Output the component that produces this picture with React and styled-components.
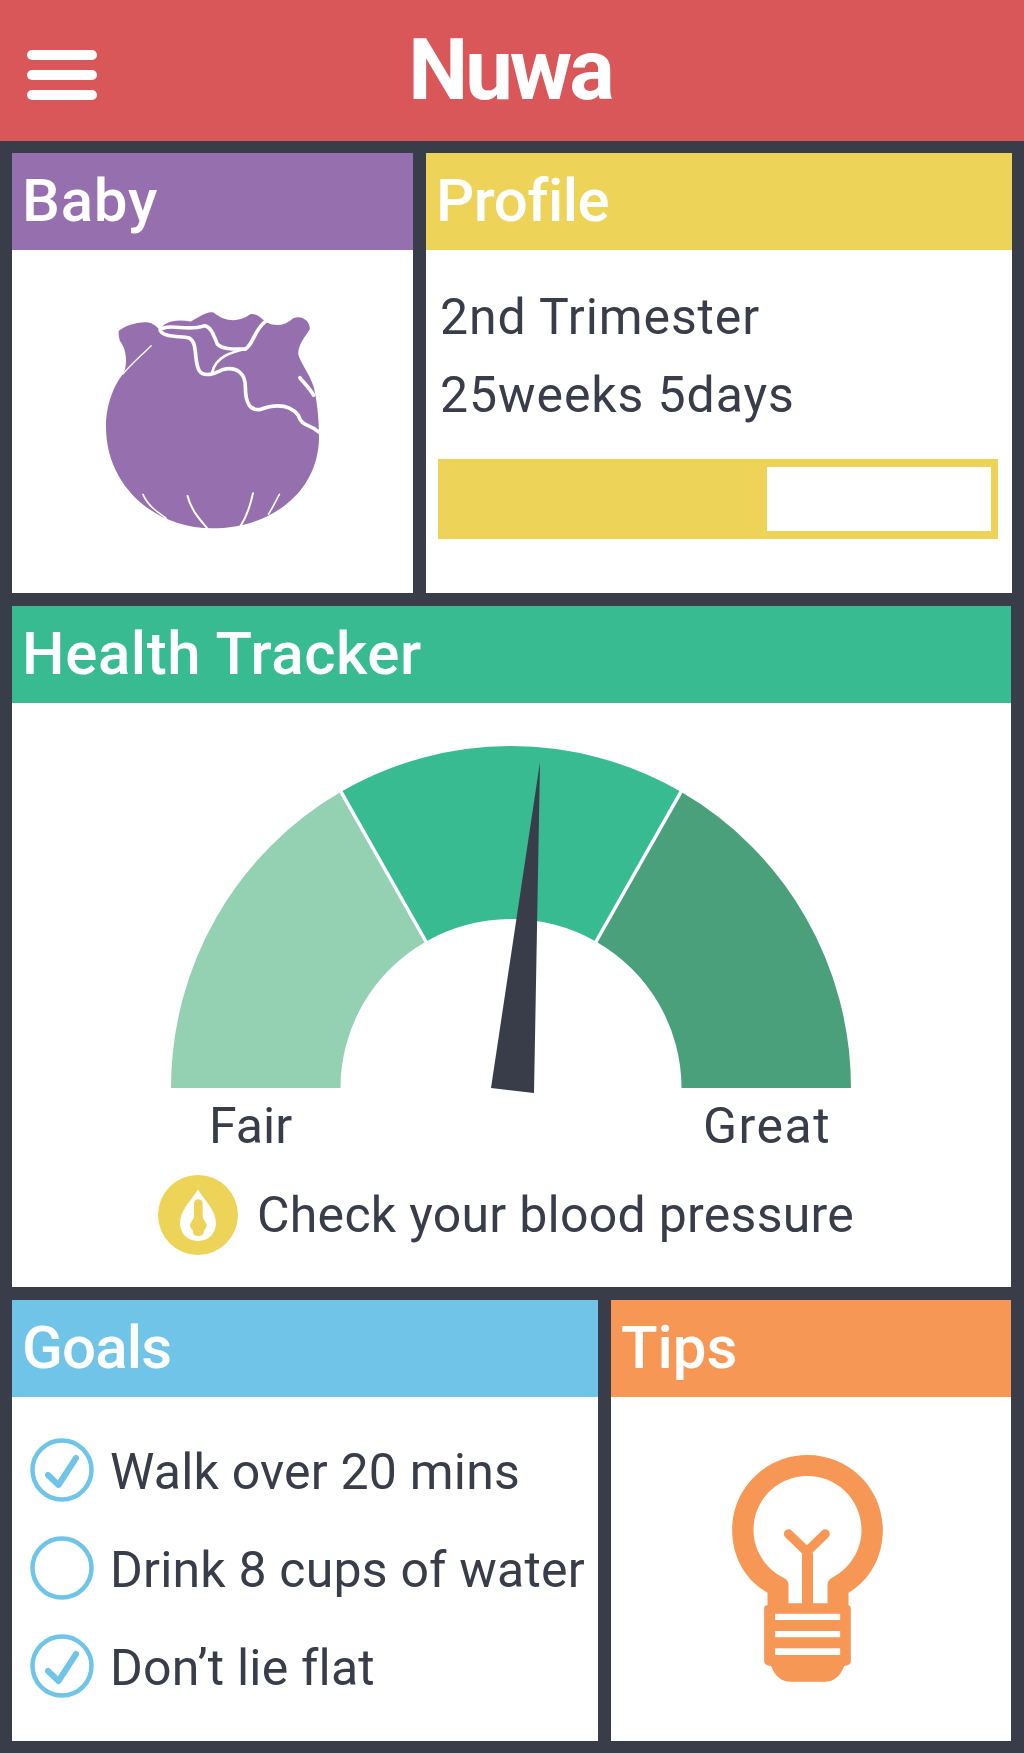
import React from 'react';
import styled, { createGlobalStyle } from 'styled-components';

const GlobalStyle = createGlobalStyle`
  html, body {
    margin: 0;
    padding: 0;
    background: #393c49;
    font-family: "Roboto", "Liberation Sans", sans-serif;
  }
`;

const Page = styled.div`
  width: 1024px;
  height: 1753px;
  background: #393c49;
  overflow: hidden;
`;

const TopBar = styled.header`
  height: 141px;
  background: #d95659;
  display: flex;
  align-items: center;
  justify-content: center;
  position: relative;
`;

const Brand = styled.h1`
  margin: 0 0 0 -4px;
  font-size: 85px;
  font-weight: 700;
  line-height: 1;
  color: #fff;
  letter-spacing: -3px;
`;

const Burger = styled.div`
  position: absolute;
  left: 27px;
  top: 50px;
  width: 70px;
  display: flex;
  flex-direction: column;
  gap: 10px;
  span {
    height: 10px;
    border-radius: 5px;
    background: #fff;
  }
`;

const Board = styled.main`
  padding: 12px 13px 12px 12px;
  display: flex;
  flex-direction: column;
  gap: 13px;
`;

const Row = styled.div`
  display: grid;
  grid-template-columns: ${p => p.$cols};
  gap: 13px;
  height: ${p => p.$height}px;
`;

const Panel = styled.section`
  background: #fff;
  display: flex;
  flex-direction: column;
  min-width: 0;
`;

const PanelTitle = styled.h2`
  margin: 0;
  height: 97px;
  flex: none;
  padding-left: 10px;
  background: ${p => p.$color};
  color: #fff;
  font-size: 60px;
  font-weight: 500;
  line-height: 95px;
  letter-spacing: ${p => p.$spacing || 0}px;
`;

const PanelBody = styled.div`
  flex: 1;
  display: flex;
  align-items: center;
  justify-content: center;
`;

const ProfileBody = styled.div`
  padding: 28px 14px 0 12px;
  color: #393c49;
`;

const ProfileLine = styled.div`
  font-size: 50px;
  line-height: 78px;
  padding-left: 2px;
  letter-spacing: 0.9px;
`;

const Track = styled.div`
  margin-top: 25px;
  height: 80px;
  box-sizing: border-box;
  background: #eed359;
  padding: 8px 7px;
  display: flex;
  justify-content: flex-end;
`;

const TrackRest = styled.div`
  width: ${p => p.$width}px;
  background: #fff;
`;

const GaugeBody = styled.div`
  flex: 1;
  display: flex;
  flex-direction: column;
  align-items: center;
  padding-top: 43px;
  color: #393c49;
`;

const GaugeSvg = styled.svg`
  display: block;
  width: 680px;
  height: 348px;
  margin-left: -2px;
`;

const GaugeLabels = styled.div`
  width: 999px;
  box-sizing: border-box;
  display: flex;
  justify-content: space-between;
  padding: 0 180px 0 197px;
  font-size: 50px;
  line-height: 60px;
  margin-top: 2px;
`;

const GaugeLabel = styled.span`
  letter-spacing: ${p => p.$spacing || 0}px;
`;

const Reminder = styled.div`
  width: 999px;
  box-sizing: border-box;
  padding-left: 146px;
  display: flex;
  align-items: center;
  gap: 19px;
  font-size: 50px;
  line-height: 80px;
  letter-spacing: 0.27px;
  margin-top: 19px;
`;

const GoalList = styled.ul`
  list-style: none;
  margin: 0;
  padding: 41px 0 0 18px;
  display: flex;
  flex-direction: column;
  gap: 34px;
  color: #393c49;
`;

const Goal = styled.li`
  display: flex;
  align-items: center;
  gap: 16px;
  height: 64px;
  font-size: 50px;
  line-height: 64px;
  letter-spacing: 0.2px;
  white-space: nowrap;
`;

const GoalText = styled.span`
  padding-top: 3px;
`;

const Cabbage = () => (
  <svg width="215" height="218" viewBox="43 90 645 660" style={{ marginTop: -4 }}>
    <path
      fill="#966fae"
      d="M82 150 C105 130 165 115 185 130 C195 135 200 142 207 148 C215 125 250 112 300 122 C325 108 350 88 370 95 C400 120 440 128 480 100 C500 96 515 115 530 125 C555 138 585 135 610 112 C640 100 662 125 660 145 C645 170 625 190 625 220 C630 245 660 280 672 320 C682 360 688 420 688 470 C688 640 540 748 365 748 C190 748 43 620 43 440 C43 370 70 310 95 280 C110 250 105 205 85 180 C82 170 80 160 82 150 Z"
    />
    <g fill="none" stroke="#fff" strokeWidth="11" strokeLinecap="round" strokeLinejoin="round">
      <path d="M207 148 C218 172 270 165 295 172 C322 185 308 240 325 270 C340 292 370 280 395 268 C440 255 465 280 465 320 C465 370 480 392 510 388 C560 370 600 375 625 405 C635 442 660 430 690 458" />
      <path d="M215 142 C250 130 290 152 340 135 C360 135 370 165 380 190 C395 207 430 205 465 205" />
      <path d="M465 205 C420 215 375 230 365 275" strokeWidth="8" />
      <path d="M465 205 C490 190 490 150 525 122" />
      <path d="M630 292 C645 310 660 325 672 345" />
      <path d="M95 280 C120 250 150 225 180 195" strokeWidth="4" />
      <path d="M155 645 C170 680 200 700 225 717" strokeWidth="5" />
      <path d="M290 650 C300 690 325 720 350 748" strokeWidth="6" />
      <path d="M488 642 C480 680 470 710 450 742" strokeWidth="6" />
      <path d="M568 645 C555 670 545 690 535 705" strokeWidth="5" />
    </g>
  </svg>
);

// angles in degrees, 180 is the left end of the dial
const point = (rx, ry, deg) => {
  const a = (deg * Math.PI) / 180;
  return [340 + rx * Math.cos(a), 342 - ry * Math.sin(a)];
};

const arcPath = (from, to) => {
  const [x1, y1] = point(340, 342, from);
  const [x2, y2] = point(340, 342, to);
  const [x3, y3] = point(170.5, 169, to);
  const [x4, y4] = point(170.5, 169, from);
  return `M${x1} ${y1} A340 342 0 0 1 ${x2} ${y2} L${x3} ${y3} A170.5 169 0 0 0 ${x4} ${y4} Z`;
};

const Separator = ({ deg }) => {
  const [x1, y1] = point(167, 166, deg);
  const [x2, y2] = point(343, 345, deg);
  return <line x1={x1} y1={y1} x2={x2} y2={y2} stroke="#fff" strokeWidth="3.5" />;
};

const Gauge = () => (
  <GaugeSvg viewBox="0 0 680 348">
    <path d={arcPath(180, 120)} fill="#94d1b3" />
    <path d={arcPath(120, 60)} fill="#38bb90" />
    <path d={arcPath(60, 0)} fill="#4ba07c" />
    <Separator deg={120} />
    <Separator deg={60} />
    <polygon points="369,16 320,342 363,347" fill="#393c49" />
  </GaugeSvg>
);

const BloodDrop = () => (
  <svg width="80" height="80" viewBox="52 45 240 240">
    <circle cx="172" cy="165" r="120" fill="#eed359" />
    <path
      fill="#fff"
      d="M172 88 C190 120 226 150 226 190 C226 222 202 243 172 243 C142 243 118 222 118 190 C118 150 154 120 172 88 Z"
    />
    <path
      fill="#eed359"
      d="M160 130 C160 114 186 114 186 130 L186 170 C188 182 198 186 198 196 C198 204 192 208 190 212 C190 224 182 228 173 228 C164 228 157 224 157 212 C154 208 148 204 148 196 C148 186 158 182 160 170 Z"
    />
  </svg>
);

const CheckCircle = ({ done }) => (
  <svg width="64" height="64" viewBox="0 0 64 64" style={{ flex: 'none' }}>
    <circle cx="32" cy="32" r="29.5" fill="none" stroke="#70c4e8" strokeWidth="4.5" />
    {done && (
      <path
        d="M18 37 L28.5 47 L46 20"
        fill="none"
        stroke="#70c4e8"
        strokeWidth="6"
        strokeLinecap="round"
        strokeLinejoin="round"
      />
    )}
  </svg>
);

const Bulb = () => (
  <svg width="151" height="227" viewBox="96 75 452 681" style={{ margin: '-2px 8px 0 0' }}>
    <path
      fill="#f79756"
      fillRule="evenodd"
      d="M202 488 C135 450 96 380 96 300 C96 175 197 75 322 75 C447 75 548 175 548 300 C548 380 510 450 445 488 L445 525 Q452 528 452 535 L452 695 Q452 705 432 708 C420 740 400 755 375 755 L270 755 C245 755 225 740 213 708 Q192 705 192 695 L192 535 Q192 528 202 525 Z M265 520 L265 465 Q265 450 250 443 C195 415 160 360 160 300 C160 210 232 138 322 138 C412 138 484 210 484 300 C484 360 450 415 396 443 Q382 450 382 465 L382 520 Z M225 551 L225 570 L420 570 L420 551 Z M225 603 L225 622 L420 622 L420 603 Z M225 655 L225 675 L420 675 L420 655 Z"
    />
    <path d="M322 525 L322 370" stroke="#f79756" strokeWidth="33" />
    <path
      d="M265 312 L320 365 L375 312"
      fill="none"
      stroke="#f79756"
      strokeWidth="28"
      strokeLinecap="round"
      strokeLinejoin="round"
    />
  </svg>
);

const goals = [
  { text: 'Walk over 20 mins', done: true },
  { text: 'Drink 8 cups of water', done: false },
  { text: 'Don’t lie flat', done: true },
];

const App = () => (
  <Page>
    <GlobalStyle />
    <TopBar>
      <Burger>
        <span />
        <span />
        <span />
      </Burger>
      <Brand>Nuwa</Brand>
    </TopBar>
    <Board>
      <Row $cols="401px 586px" $height={440}>
        <Panel>
          <PanelTitle $color="#966fae" $spacing={0.8}>Baby</PanelTitle>
          <PanelBody>
            <Cabbage />
          </PanelBody>
        </Panel>
        <Panel>
          <PanelTitle $color="#eed359" $spacing={-0.5}>Profile</PanelTitle>
          <ProfileBody>
            <ProfileLine>2nd Trimester</ProfileLine>
            <ProfileLine>25weeks 5days</ProfileLine>
            <Track>
              <TrackRest $width={224} />
            </Track>
          </ProfileBody>
        </Panel>
      </Row>
      <Row $cols="999px" $height={681}>
        <Panel>
          <PanelTitle $color="#38bb90" $spacing={0.6}>Health Tracker</PanelTitle>
          <GaugeBody>
            <Gauge />
            <GaugeLabels>
              <GaugeLabel>Fair</GaugeLabel>
              <GaugeLabel $spacing={1.5}>Great</GaugeLabel>
            </GaugeLabels>
            <Reminder>
              <BloodDrop />
              <span>Check your blood pressure</span>
            </Reminder>
          </GaugeBody>
        </Panel>
      </Row>
      <Row $cols="586px 400px" $height={441}>
        <Panel>
          <PanelTitle $color="#70c4e8" $spacing={-0.8}>Goals</PanelTitle>
          <GoalList>
            {goals.map(goal => (
              <Goal key={goal.text}>
                <CheckCircle done={goal.done} />
                <GoalText>{goal.text}</GoalText>
              </Goal>
            ))}
          </GoalList>
        </Panel>
        <Panel>
          <PanelTitle $color="#f79756">Tips</PanelTitle>
          <PanelBody>
            <Bulb />
          </PanelBody>
        </Panel>
      </Row>
    </Board>
  </Page>
);

export default App;
